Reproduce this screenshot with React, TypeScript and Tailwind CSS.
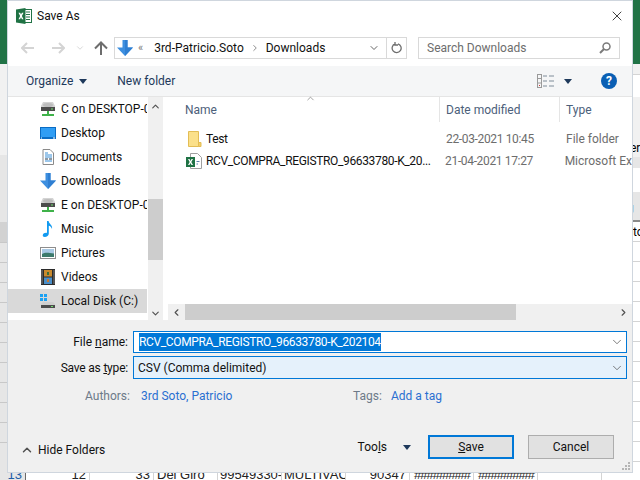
import { ChevronDown, ChevronLeft, ChevronRight, ChevronUp, X } from "lucide-react";

const font = "font-['Roboto',sans-serif]";

function DriveNet() {
  return (
    <svg width="16" height="16" viewBox="0 0 16 16">
      <path d="M3 1h10l2 4v4H1V5z" fill="#d4d4d4" />
      <ellipse cx="8" cy="4" rx="5" ry="2" fill="#bdbdbd" />
      <rect x="1" y="6" width="14" height="4" fill="#4c4c4c" />
      <rect x="11" y="7.5" width="2" height="1" fill="#6fe06f" />
      <rect x="7" y="10" width="2" height="3" fill="#3fb24a" />
      <rect x="2" y="13" width="12" height="2" fill="#3fb24a" />
    </svg>
  );
}

function Desktop() {
  return (
    <svg width="16" height="16" viewBox="0 0 16 16">
      <rect x="0" y="2" width="16" height="12" fill="#0a6cc4" />
      <rect x="1" y="3" width="14" height="9" fill="#2f9df4" />
      <rect x="1" y="12.5" width="1" height="1" fill="#fff" />
      <rect x="13" y="12.5" width="2" height="1" fill="#fff" />
    </svg>
  );
}

function Documents() {
  return (
    <svg width="16" height="16" viewBox="0 0 16 16">
      <path d="M3 .5h7l3.5 3.5v11.5H3z" fill="#fff" stroke="#8a8a8a" />
      <path d="M5 4h3M5 6h7M5 8h7M5 12h7" stroke="#3a8fd6" />
      <path d="M5 10h3M9 10h3" stroke="#6a7a88" strokeWidth="1.5" />
    </svg>
  );
}

function DownArrow() {
  return (
    <svg width="16" height="16" viewBox="0 0 16 16">
      <path d="M5.5 0h5v7.5H16L8 16 0 7.5h5.5z" fill="#3d8fe0" />
      <path d="M8 0h2.5v7.5H16L8 16z" fill="#2f7fd2" />
    </svg>
  );
}

function Music() {
  return (
    <svg width="16" height="16" viewBox="0 0 16 16">
      <path d="M7 0h1.6c.3 3 4.4 4 3.4 8-.5-2-2-3-3.2-3.3V12.5c0 2-2 3.5-4 3.5-1.5 0-2.3-1-2-2 .3-1.5 2.5-2.5 4.2-2z" fill="#129af0" />
    </svg>
  );
}

function Pictures() {
  return (
    <svg width="16" height="16" viewBox="0 0 16 16">
      <rect x="0.5" y="2.5" width="15" height="11" fill="#fff" stroke="#8d8d8d" />
      <rect x="2" y="4" width="12" height="8" fill="#a9c9e4" />
      <path d="M2 9c3-2 6-1.5 12-.5V12H2z" fill="#3c7a6b" />
    </svg>
  );
}

function Videos() {
  return (
    <svg width="16" height="16" viewBox="0 0 16 16">
      <rect x="1" y="0" width="14" height="16" fill="#2b2b2b" />
      <path d="M2 1.500v13M14 1.500v13" stroke="#d9d9d9" strokeWidth="1" strokeDasharray="1 1" />
      <rect x="4" y="1" width="8" height="6.5" fill="#c98a2e" />
      <rect x="4" y="8.5" width="8" height="6.5" fill="#4a8fc9" />
      <rect x="7" y="3" width="2" height="3" fill="#3b6e3b" />
      <rect x="7" y="10" width="2" height="3" fill="#c9772e" />
    </svg>
  );
}

function LocalDisk() {
  return (
    <svg width="16" height="16" viewBox="0 0 16 16">
      <path d="M0 1h3v3H0zM4 1h3v3H4zM0 5h3v3H0zM4 5h3v3H4z" fill="#1ba1f2" />
      <path d="M3 9h10l2 2v1H1v-1z" fill="#cfcfcf" />
      <rect x="1" y="12" width="14" height="3" fill="#4c4c4c" />
      <rect x="11" y="13" width="2" height="1" fill="#6fe06f" />
    </svg>
  );
}

function ExcelIcon() {
  return (
    <svg width="16" height="16" viewBox="0 0 16 16">
      <rect x="5" y="1.5" width="10.5" height="13" fill="#fff" stroke="#217346" />
      <path d="M10 4h4M10 6.500h4M10 9h4M10 11.500h4" stroke="#217346" />
      <path d="M0 1.500 9.500 0v16L0 14.500z" fill="#1f7244" />
      <path d="M2.500 4.800h1.700L5 6.600l.9-1.800h1.600L5.900 8l1.600 3.200H5.900L5 9.300l-.9 1.900H2.500L4.100 8z" fill="#fff" />
    </svg>
  );
}

function ExcelFile() {
  return (
    <svg width="16" height="16" viewBox="0 0 16 16">
      <path d="M4.500 .5h7l4 4v11h-11z" fill="#fff" stroke="#a0a0a0" />
      <rect x="0" y="4" width="9" height="10" fill="#1f7244" />
      <path d="M2 6h1.500L4.500 8 5.500 6H7L5.300 9 7 12H5.500l-1-2-1 2H2l1.700-3z" fill="#fff" />
      <path d="M10.500 8.500h3M10.500 11h1.500" stroke="#5a7fa8" />
    </svg>
  );
}

function Folder() {
  return (
    <svg width="16" height="16" viewBox="0 0 16 16">
      <path d="M2.500 .5h10v15h-10z" fill="#fbe08a" stroke="#e3bd55" />
      <path d="M12.500 11.500h2.500v4h-2.500z" fill="#f4cf68" stroke="#e3bd55" />
    </svg>
  );
}

function Caret() {
  return <span className="block w-0 h-0 border-x-[4px] border-x-transparent border-t-[5px] border-t-[#1e395b]" />;
}

function ViewIcon() {
  return (
    <svg className="block" width="18" height="14" viewBox="0 0 18 14" fill="none">
      <rect x="0.5" y="0.5" width="4" height="13" stroke="#9a9a9a" />
      <path d="M1 4.500h3M1 9h3" stroke="#9a9a9a" />
      <rect x="2" y="11" width="1" height="1" fill="#d23b3b" />
      <path d="M6 2h4M12 2h5M6 7h4M12 7h5M6 12h4M12 12h5" stroke="#7f8c99" />
    </svg>
  );
}

function NavRow({ icon, label, selected }: { icon: React.ReactNode; label: string; selected?: boolean }) {
  return (
    <div className={`flex items-center h-[24px] w-[139px] pl-[32px] overflow-hidden ${selected ? "bg-[#d9d9d9]" : ""}`}>
      <span className="w-[16px] h-[16px] shrink-0">{icon}</span>
      <span className="ml-[5px] whitespace-nowrap text-[#111]">{label}</span>
    </div>
  );
}

function FileRow({ icon, name, date, type }: { icon: React.ReactNode; name: string; date: string; type: string }) {
  return (
    <div className="flex items-center h-[22px]">
      <span className="w-[16px] h-[16px] ml-[18px] shrink-0">{icon}</span>
      <span className="ml-[4px] w-[240px] whitespace-nowrap tracking-[-0.35px] text-[#111]">{name}</span>
      <span className="w-[120px] whitespace-nowrap tracking-[-0.35px] text-[#6d6d6d]">{date}</span>
      <span className="whitespace-nowrap text-[#6d6d6d]">{type}</span>
    </div>
  );
}

export default function App() {
  return (
    <div className={`relative w-[640px] h-[480px] overflow-hidden bg-white text-[12px] ${font}`}>
      {/* Excel behind the dialog */}
      <div className="absolute left-0 top-0 w-[7px] h-[480px] flex flex-col bg-[#e6e6e6]">
        <div className="h-[64px] shrink-0 bg-[#217346]" />
        <div className="h-[91px] shrink-0 bg-[#f1f1f1]" />
        <div className="h-[67px] shrink-0" />
        <div className="h-[20px] shrink-0 bg-[#d2d2d2]" />
        {[0, 1, 2, 3, 4, 5, 6, 7, 8, 9, 10].map((i) => (
          <div key={i} className="h-[20px] shrink-0 border-t border-[#c8c8c8]" />
        ))}
      </div>
      <div className="absolute right-0 top-0 w-[7px] h-[480px] flex flex-col bg-white">
        <div className="h-[64px] shrink-0 bg-[#217346]" />
        <div className="h-[11px] shrink-0 bg-[#f1f1f1] border-b border-[#d4d4d4]" />
        <div className="h-[22px] shrink-0" />
        <div className="h-[60px] shrink-0 bg-[#f1f1f1] overflow-hidden">
          <span className="block mt-[43px] -ml-[3px] leading-[16px] whitespace-nowrap">er</span>
        </div>
        <div className="h-[11px] shrink-0 bg-[#e6e6e6]" />
        <div className="h-[24px] shrink-0" />
        <div className="h-[30px] shrink-0 bg-[#e6e6e6] border-b-2 border-[#8a8a8a] overflow-hidden">
          <span className="block mt-[10px] -ml-[7px] leading-[16px] text-[#3a1a5a]">U</span>
        </div>
        <div className="h-[20px] shrink-0 border-b border-[#d4d4d4] overflow-hidden">
          <span className="block leading-[20px] whitespace-nowrap">to</span>
        </div>
        {[0, 1, 2, 3, 4, 5, 6, 7, 8, 9, 10].map((i) => (
          <div key={i} className="h-[20px] shrink-0 border-b border-[#d4d4d4]" />
        ))}
      </div>
      <div className="absolute left-0 top-[465px] h-[20px] flex items-center whitespace-nowrap text-[13px] font-['Liberation_Sans',sans-serif] text-[#222] bg-white">
        <div className="w-[26px] h-full bg-[#e6e6e6] border-r border-[#6a6a6a] text-right pr-[3px] text-[#1f5fa8]">13</div>
        <div className="w-[64px] h-full border-r border-[#d4d4d4] text-right pr-[3px]">12</div>
        <div className="w-[64px] h-full border-r border-[#d4d4d4] text-right pr-[3px]">33</div>
        <div className="w-[64px] h-full border-r border-[#d4d4d4] pl-[3px]">Del Giro</div>
        <div className="w-[64px] h-full border-r border-[#d4d4d4] pl-[2px] overflow-hidden">99549330-</div>
        <div className="w-[64px] h-full border-r border-[#d4d4d4] pl-[2px] overflow-hidden">MULTIVAC</div>
        <div className="w-[64px] h-full border-r border-[#d4d4d4] text-right pr-[3px]">90347</div>
        <div className="w-[64px] h-full border-r border-[#d4d4d4] pl-[4px] overflow-hidden tracking-[-1px]">#########</div>
        <div className="w-[64px] h-full border-r border-[#d4d4d4] pl-[4px] overflow-hidden tracking-[-1px]">#########</div>
        <div className="w-[64px] h-full border-r border-[#d4d4d4]" />
      </div>

      {/* Save As dialog */}
      <div className="absolute left-[7px] top-0 w-[626px] h-[473px] flex flex-col bg-white border border-[#cfd6de]">
        <div className="flex items-center h-[30px] shrink-0 pl-[8px] pr-[6px]">
          <ExcelIcon />
          <span className="ml-[5px] text-[#111]">Save As</span>
          <X className="ml-auto mr-[1px]" size={16} strokeWidth={1.2} color="#111" />
        </div>

        <div className="flex items-center h-[35px] shrink-0 pb-[1px]">
          <svg className="ml-[13px]" width="14" height="12" viewBox="0 0 14 12" fill="none" stroke="#d4d4d4" strokeWidth="2"><path d="M13 6H2M6 1 1 6l5 5" /></svg>
          <svg className="ml-[16px]" width="14" height="12" viewBox="0 0 14 12" fill="none" stroke="#d4d4d4" strokeWidth="2"><path d="M1 6h11M8 1l5 5-5 5" /></svg>
          <ChevronDown className="ml-[10px]" size={10} strokeWidth={2} color="#d0d0d0" />
          <svg className="ml-[9px]" width="14" height="14" viewBox="0 0 14 14" fill="none" stroke="#6d6d6d" strokeWidth="2"><path d="M7 14V2M1 7.500 7 1.500l6 6" /></svg>
          <div className="ml-[6px] w-[293px] h-[22px] flex items-center border border-[#d9d9d9]">
            <span className="ml-[2px]"><DownArrow /></span>
            <span className="ml-[5px] text-[#777] text-[11px]">«</span>
            <span className="ml-[11px] text-[#111]">3rd-Patricio.Soto</span>
            <ChevronRight className="ml-[6px]" size={10} strokeWidth={2} color="#777" />
            <span className="ml-[6px] text-[#111]">Downloads</span>
            <ChevronDown className="ml-auto mr-[6px]" size={12} strokeWidth={2} color="#666" />
            <div className="w-[20px] h-full flex items-center justify-center border-l border-[#d9d9d9]">
              <svg width="12" height="12" viewBox="0 0 12 12" fill="none" stroke="#6d6d6d" strokeWidth="1.3"><path d="M7 1.800a4.500 4.500 0 1 1-3 .1M4 0v3h3" /></svg>
            </div>
          </div>
          <div className="ml-[11px] w-[202px] h-[22px] flex items-center border border-[#d9d9d9] px-[8px]">
            <span className="text-[#6d6d6d]">Search Downloads</span>
            <svg className="ml-auto" width="12" height="12" viewBox="0 0 12 12" fill="none" stroke="#7a7a7a" strokeWidth="1.5"><circle cx="7.500" cy="4.500" r="3.500" /><path d="M5 7 1 11" strokeWidth="2" /></svg>
          </div>
        </div>

        <div className="flex items-center h-[31px] shrink-0 bg-[#f5f6f7] border-b border-[#e5e5e5] text-[#1e395b]">
          <span className="ml-[18px]">Organize</span>
          <span className="ml-[6px]"><Caret /></span>
          <span className="ml-[30px]">New folder</span>
          <span className="ml-auto"><ViewIcon /></span>
          <span className="ml-[9px]"><Caret /></span>
          <span className="ml-[29px] mr-[15px] w-[16px] h-[16px] rounded-full bg-[#0a5fb4] text-white font-bold flex items-center justify-center text-[12px]">?</span>
        </div>

        <div className="flex h-[223px] shrink-0">
          <div className="w-[139px] shrink-0 flex flex-col overflow-hidden">
            <NavRow icon={<DriveNet />} label="C on DESKTOP-0" />
            <NavRow icon={<Desktop />} label="Desktop" />
            <NavRow icon={<Documents />} label="Documents" />
            <NavRow icon={<DownArrow />} label="Downloads" />
            <NavRow icon={<DriveNet />} label="E on DESKTOP-0" />
            <NavRow icon={<Music />} label="Music" />
            <NavRow icon={<Pictures />} label="Pictures" />
            <NavRow icon={<Videos />} label="Videos" />
            <NavRow icon={<LocalDisk />} label="Local Disk (C:)" selected />
          </div>

          <div className="relative w-[15px] ml-[1px] shrink-0 bg-[#f0f0f0]">
            <ChevronUp className="absolute left-[2px] top-[4px]" size={11} strokeWidth={2.5} color="#505050" />
            <div className="absolute left-0 top-[102px] w-full h-[61px] bg-[#cdcdcd]" />
            <ChevronDown className="absolute left-[2px] bottom-[1px]" size={11} strokeWidth={2.5} color="#505050" />
          </div>

          <div className="flex-1 ml-[5px] flex flex-col min-w-0">
            <div className="relative flex items-center h-[25px] shrink-0 text-[#4c607a]">
              <span className="w-[271px] pl-[17px]">Name</span>
              <span className="w-[120px] pl-[6px] border-l border-[#e5e5e5] h-full flex items-center">Date modified</span>
              <span className="pl-[6px] border-l border-[#e5e5e5] h-full flex items-center">Type</span>
              <ChevronUp className="absolute left-[137px] -top-[4px]" size={11} strokeWidth={1.5} color="#777" />
            </div>
            <div className="flex-1 pt-[6px] overflow-hidden">
              <FileRow icon={<Folder />} name="Test" date="22-03-2021 10:45" type="File folder" />
              <FileRow icon={<ExcelFile />} name="RCV_COMPRA_REGISTRO_96633780-K_20..." date="21-04-2021 17:27" type="Microsoft Ex" />
            </div>
            <div className="flex h-[16px] shrink-0 bg-[#f0f0f0]">
              <span className="w-[17px] flex items-center justify-center"><ChevronLeft size={11} strokeWidth={2.5} color="#505050" /></span>
              <div className="w-[331px] bg-[#cdcdcd]" />
              <span className="ml-auto w-[17px] flex items-center justify-center"><ChevronRight size={11} strokeWidth={2.5} color="#505050" /></span>
            </div>
          </div>
        </div>

        <div className="relative flex-1 bg-[#f0f0f0] flex flex-col">
          <div className="flex items-center mt-[11px] h-[22px]">
            <span className="w-[120px] text-right text-[#111]">File <span className="underline">n</span>ame:</span>
            <div className="ml-[5px] w-[494px] h-[22px] flex items-center bg-white border border-[#0078d7] pl-[5px]">
              <span className="bg-[#0078d7] text-white h-[18px] leading-[18px] whitespace-nowrap tracking-[-0.35px]">RCV_COMPRA_REGISTRO_96633780-K_202104</span>
              <ChevronDown className="ml-auto mr-[2px]" size={14} strokeWidth={1.3} color="#555" />
            </div>
          </div>
          <div className="flex items-center mt-[3px] h-[23px]">
            <span className="w-[120px] text-right text-[#111] tracking-[-0.2px]">Save as <span className="underline">t</span>ype:</span>
            <div className="ml-[5px] w-[494px] h-[23px] flex items-center bg-[#e5f1fb] border border-[#0078d7] pl-[4px]">
              <span className="text-[#111]">CSV (Comma delimited)</span>
              <ChevronDown className="ml-auto mr-[2px]" size={14} strokeWidth={1.3} color="#555" />
            </div>
          </div>
          <div className="flex items-center mt-[8px] h-[18px]">
            <span className="ml-[77px] text-[#6d7a88]">Authors:</span>
            <span className="absolute left-[133px] text-[#2a6fd0]">3rd Soto, Patricio</span>
            <span className="absolute left-[345px] text-[#6d7a88]">Tags:</span>
            <span className="absolute left-[383px] text-[#2a6fd0]">Add a tag</span>
          </div>
          <div className="flex items-center mt-[30px] h-[24px]">
            <div className="flex items-center mt-[6px]">
              <ChevronUp className="ml-[12px]" size={14} strokeWidth={2.5} color="#505050" />
              <span className="ml-[4px] text-[#111]">Hide Folders</span>
            </div>
            <span className="ml-auto text-[#111]">Too<span className="underline">l</span>s</span>
            <span className="ml-[16px]"><Caret /></span>
            <div className="ml-[17px] w-[86px] h-[24px] flex items-center justify-center bg-[#e1e1e1] border-2 border-[#0078d7] text-[#111]">
              <span><span className="underline">S</span>ave</span>
            </div>
            <div className="ml-[14px] mr-[18px] w-[86px] h-[24px] flex items-center justify-center bg-[#e1e1e1] border border-[#adadad] text-[#111]">Cancel</div>
          </div>
          <svg className="absolute right-[1px] bottom-[1px]" width="9" height="9" viewBox="0 0 9 9" fill="#b5b5b5">
            <path d="M6 0h2v2H6zM3 3h2v2H3zM6 3h2v2H6zM0 6h2v2H0zM3 6h2v2H3zM6 6h2v2H6z" />
          </svg>
        </div>
      </div>
    </div>
  );
}
